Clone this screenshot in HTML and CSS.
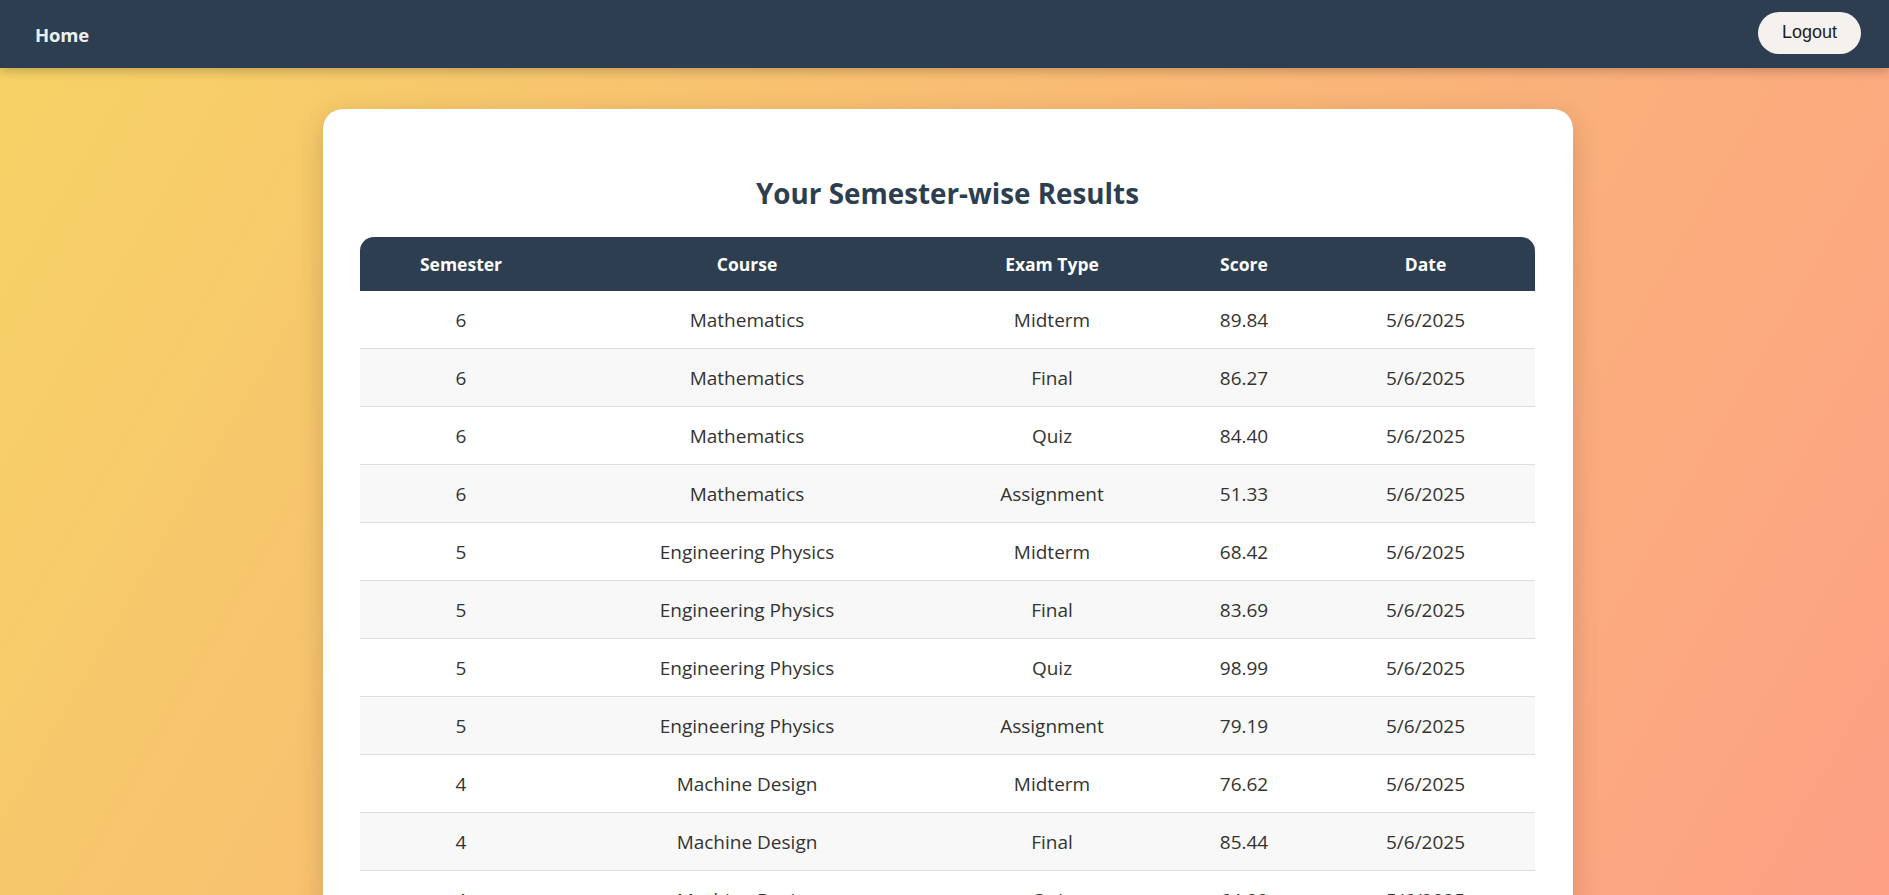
FILE: index.html
```html
<!DOCTYPE html>
<html lang="en">
<head>
<meta charset="utf-8">
<title>Results</title>
<link rel="stylesheet" href="styles.css">
</head>
<body>
<nav class="navbar">
  <a class="nav-home" href="#">Home</a>
  <button class="logout-btn">Logout</button>
</nav>
<main class="page">
  <section class="card">
    <h2 class="title">Your Semester-wise Results</h2>
    <table class="results">
      <colgroup>
        <col class="c-sem"><col class="c-course"><col class="c-type"><col class="c-score"><col class="c-date">
      </colgroup>
      <thead>
        <tr><th>Semester</th><th>Course</th><th>Exam Type</th><th>Score</th><th>Date</th></tr>
      </thead>
      <tbody>
        <tr><td>6</td><td>Mathematics</td><td>Midterm</td><td>89.84</td><td>5/6/2025</td></tr>
        <tr><td>6</td><td>Mathematics</td><td>Final</td><td>86.27</td><td>5/6/2025</td></tr>
        <tr><td>6</td><td>Mathematics</td><td>Quiz</td><td>84.40</td><td>5/6/2025</td></tr>
        <tr><td>6</td><td>Mathematics</td><td>Assignment</td><td>51.33</td><td>5/6/2025</td></tr>
        <tr><td>5</td><td>Engineering Physics</td><td>Midterm</td><td>68.42</td><td>5/6/2025</td></tr>
        <tr><td>5</td><td>Engineering Physics</td><td>Final</td><td>83.69</td><td>5/6/2025</td></tr>
        <tr><td>5</td><td>Engineering Physics</td><td>Quiz</td><td>98.99</td><td>5/6/2025</td></tr>
        <tr><td>5</td><td>Engineering Physics</td><td>Assignment</td><td>79.19</td><td>5/6/2025</td></tr>
        <tr><td>4</td><td>Machine Design</td><td>Midterm</td><td>76.62</td><td>5/6/2025</td></tr>
        <tr><td>4</td><td>Machine Design</td><td>Final</td><td>85.44</td><td>5/6/2025</td></tr>
        <tr><td>4</td><td>Machine Design</td><td>Quiz</td><td>64.90</td><td>5/6/2025</td></tr>
        <tr><td>4</td><td>Machine Design</td><td>Assignment</td><td>72.18</td><td>5/6/2025</td></tr>
      </tbody>
    </table>
  </section>
</main>
</body>
</html>
```
FILE: styles.css
```css
* { box-sizing: border-box; }
html, body { margin: 0; padding: 0; }
body {
  font-family: "Open Sans", "Noto Sans", sans-serif;
  background: linear-gradient(120deg, #f6d365 0%, #fda085 100%);
  background-attachment: fixed;
  min-height: 100vh;
  color: #333;
}
.navbar {
  height: 68px;
  background: #2c3e50;
  display: flex;
  align-items: center;
  justify-content: space-between;
  padding: 0 28px 0 35px;
  box-shadow: 0 3px 10px rgba(0,0,0,0.22);
  position: relative;
  z-index: 2;
}
.nav-home {
  color: #ecf0f1;
  text-decoration: none;
  font-weight: 700;
  font-size: 18.5px;
  letter-spacing: -0.2px;
}
.logout-btn {
  font-family: "Liberation Sans", Arial, sans-serif;
  font-size: 18px;
  color: #1e1e1e;
  background: #f4f1ef;
  border: none;
  border-radius: 21px;
  height: 42px;
  width: 103px;
  padding: 0;
  margin-top: -3px;
}
.page {
  padding: 41px 0 40px 7px;
}
.card {
  width: 1250px;
  margin: 0 auto;
  background: #fff;
  border-radius: 20px;
  padding: 37px 38px 37px 37px;
  box-shadow: 0 8px 28px rgba(0,0,0,0.16);
}
.title {
  margin: 29px 0 26px;
  text-align: center;
  color: #2c3e50;
  font-size: 27.8px;
  font-weight: 700;
  line-height: 36px;
}
.results {
  width: 100%;
  table-layout: fixed;
  border-collapse: separate;
  border-spacing: 0;
}
.c-sem { width: 202px; }
.c-course { width: 370px; }
.c-type { width: 240px; }
.c-score { width: 144px; }
.c-date { width: 219px; }
.results th {
  background: #2c3e50;
  color: #fff;
  font-weight: 700;
  font-size: 17.5px;
  height: 54px;
  padding: 0 10px;
  text-align: center;
}
.results th:first-child { border-top-left-radius: 14px; }
.results th:last-child { border-top-right-radius: 14px; }
.results td {
  height: 58px;
  padding: 0 10px;
  text-align: center;
  font-size: 19px;
  color: #333;
  border-bottom: 1px solid #ddd;
}
.results tbody tr:nth-child(even) td { background: #f8f8f8; }
```
